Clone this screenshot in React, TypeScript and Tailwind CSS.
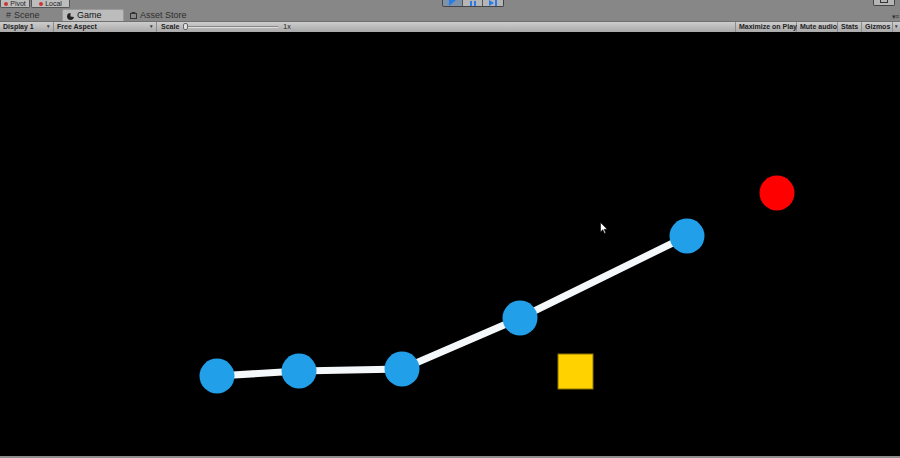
import React from "react";

const font = { fontFamily: '"Liberation Sans", Arial, sans-serif' };

export default function App() {
  return (
    <main
      className="w-[900px] h-[458px] overflow-hidden bg-black flex flex-col"
      style={font}
    >
      <TopStrip />
      <TabRow />
      <GameToolbar />
      <GameView />
      <div className="h-[2px] bg-[#8f8f8f]" />
    </main>
  );
}

function TopStrip() {
  return (
    <div className="h-[8px] bg-[#878787] flex items-end overflow-hidden relative">
      <div className="flex items-start h-full">
        <div className="h-[8px] w-[30px] border border-t-0 border-[#555] rounded-b-[2px] bg-[#bdbdbd] flex items-center justify-center gap-[2px] text-[7px] leading-[7px] text-[#222] whitespace-nowrap">
          <span className="w-[4px] h-[4px] rounded-full bg-[#c33]" />
          Pivot
        </div>
        <div className="h-[8px] w-[39px] ml-[1px] border border-t-0 border-[#555] rounded-b-[2px] bg-[#bdbdbd] flex items-center justify-center gap-[2px] text-[7px] leading-[7px] text-[#222] whitespace-nowrap">
          <span className="w-[4px] h-[4px] rounded-full bg-[#c33]" />
          Local
        </div>
      </div>
      <div className="ml-[372px] flex h-[7px] self-start border border-t-0 border-[#444] rounded-b-[2px] overflow-hidden">
        <div className="w-[20px] bg-[#7f93a8] flex items-center justify-center border-r border-[#555]">
          <svg width="7" height="6" viewBox="0 0 7 6">
            <path d="M0 0 L7 0 L0 6 Z" fill="#2a7be6" />
          </svg>
        </div>
        <div className="w-[20px] bg-[#b5b5b5] flex items-center justify-center gap-[2px] border-r border-[#555]">
          <span className="w-[2px] h-[5px] bg-[#2a7be6]" />
          <span className="w-[2px] h-[5px] bg-[#2a7be6]" />
        </div>
        <div className="w-[20px] bg-[#b5b5b5] flex items-center justify-center">
          <svg width="8" height="6" viewBox="0 0 8 6">
            <path d="M0 0 L5 3 L0 6 Z M6 0 L8 0 L8 6 L6 6 Z" fill="#2a7be6" />
          </svg>
        </div>
      </div>
      <div className="ml-auto mr-[5px] self-start w-[22px] h-[6px] border border-t-0 border-[#444] bg-[#b5b5b5] rounded-b-[2px] flex justify-center">
        <span className="w-[8px] h-[3px] border border-t-0 border-[#333]" />
      </div>
    </div>
  );
}

function TabRow() {
  return (
    <div className="h-[13px] bg-[#878787] flex items-end pl-[3px] relative">
      <div className="w-[58px] h-[11px] flex items-center gap-[3px] pl-[3px] text-[9px] text-[#2e2e2e] whitespace-nowrap">
        <span className="text-[9px] leading-none">#</span>
        Scene
      </div>
      <div className="w-[62px] h-[12px] ml-[1px] bg-[#bcbcbc] rounded-t-[2px] border border-b-0 border-[#9a9a9a] flex items-center gap-[3px] pl-[4px] pt-[1px] text-[9px] text-[#111]">
        <svg width="7" height="7" viewBox="0 0 7 7">
          <path d="M3.5 0 A3.5 3.5 0 1 0 7 4 L3.5 3.5 Z" fill="#222" />
        </svg>
        Game
      </div>
      <div className="h-[11px] flex items-center gap-[3px] pl-[6px] text-[9px] text-[#2e2e2e] whitespace-nowrap">
        <svg width="7" height="7" viewBox="0 0 7 7">
          <rect x="0.5" y="1.5" width="6" height="5" fill="none" stroke="#333" />
          <path d="M2 1.5 V0.5 H5 V1.5" fill="none" stroke="#333" />
        </svg>
        Asset Store
      </div>
      <div className="ml-auto mr-[2px] mb-[1px] text-[7px] leading-none text-[#333] tracking-[-1px]">
        ▾≡
      </div>
    </div>
  );
}

function ToolItem({
  children,
  w,
  arrow,
}: {
  children: React.ReactNode;
  w?: string;
  arrow?: boolean;
}) {
  return (
    <div
      className={`h-full flex items-center px-[3px] border-r border-[#8c8c8c] text-[7px] font-bold text-[#222] whitespace-nowrap ${w ?? ""}`}
    >
      <span className="flex-1">{children}</span>
      {arrow && <span className="text-[5px] text-[#444] ml-[2px]">▾</span>}
    </div>
  );
}

function GameToolbar() {
  return (
    <div className="h-[11px] bg-gradient-to-b from-[#cdcdcd] to-[#a9a9a9] border-t border-[#6f6f6f] flex items-center">
      <ToolItem w="w-[54px]" arrow>
        Display 1
      </ToolItem>
      <ToolItem w="w-[103px]" arrow>
        Free Aspect
      </ToolItem>
      <div className="h-full w-[140px] flex items-center px-[4px] text-[7px] font-bold text-[#222]">
        Scale
        <div className="relative ml-[5px] w-[94px] h-[2px] bg-[#888] border-b border-[#ddd]">
          <span className="absolute -left-[1px] -top-[3px] w-[5px] h-[7px] rounded-[2px] bg-[#e0e0e0] border border-[#666]" />
        </div>
        <span className="ml-[5px] font-normal">1x</span>
      </div>
      <div className="flex-1 h-full" />
      <div className="h-full border-l border-[#8c8c8c]" />
      <ToolItem w="w-[61px]">Maximize on Play</ToolItem>
      <ToolItem w="w-[41px]">Mute audio</ToolItem>
      <ToolItem w="w-[24px]">Stats</ToolItem>
      <div className="h-full w-[38px] flex items-center pl-[3px] text-[7px] font-bold text-[#222]">
        <span className="flex-1">Gizmos</span>
        <span className="w-[1px] h-full bg-[#8c8c8c]" />
        <span className="text-[5px] text-[#444] px-[2px]">▾</span>
      </div>
    </div>
  );
}

function GameView() {
  // scene coordinates are relative to the game view (which starts at y=32)
  const nodes = [
    [217, 344],
    [299, 339],
    [402, 337],
    [520, 286],
    [687, 204],
  ];
  const pts = nodes.map(([x, y]) => `${x},${y}`).join(" ");
  return (
    <div className="relative flex-1 bg-black">
      <svg width="900" height="424" className="absolute inset-0">
        <polyline
          points={pts}
          fill="none"
          stroke="#f4f8fa"
          strokeWidth="7"
          strokeLinejoin="round"
        />
        {nodes.map(([x, y], i) => (
          <circle key={i} cx={x} cy={y} r="17.5" fill="#219fe9" />
        ))}
        <circle cx="777" cy="161" r="17.5" fill="#ff0000" />
        <rect x="558" y="322" width="35" height="35" fill="#ffd200" stroke="#8a7400" strokeWidth="1" />
      </svg>
      <svg
        width="8"
        height="13"
        viewBox="0 0 8 13"
        className="absolute left-[600px] top-[190px]"
      >
        <path
          d="M0.5 0.5 L0.5 10 L2.8 7.8 L4.5 11.5 L5.8 11 L4.2 7.3 L7.3 7.3 Z"
          fill="#fff"
          stroke="#000"
          strokeWidth="0.6"
        />
      </svg>
    </div>
  );
}
